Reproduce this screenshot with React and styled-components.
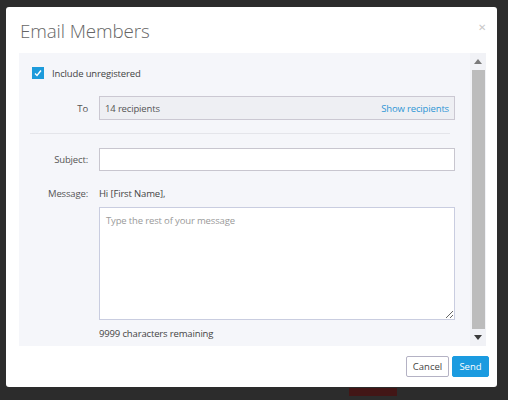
import React from "react";
import styled, { createGlobalStyle } from "styled-components";

const Global = createGlobalStyle`
  html, body { margin: 0; padding: 0; background: #2d2d2d; }
  body { font-family: "Open Sans", "Noto Sans", Arial, sans-serif; }
  * { box-sizing: border-box; }
`;

const Page = styled.div`
  width: 508px;
  height: 400px;
  overflow: hidden;
  background: #2c2c2c;
  padding: 7px 11px 0 6px;
  display: flex;
  flex-direction: column;
`;

const Modal = styled.div`
  width: 491px;
  height: 380px;
  background: #fff;
  border-radius: 3px;
  display: flex;
  flex-direction: column;
  flex-shrink: 0;
`;

const Header = styled.div`
  height: 46px;
  display: flex;
  align-items: center;
  justify-content: space-between;
  padding: 0 11px 0 14px;
`;

const Title = styled.h1`
  margin: 0;
  font-size: 18.8px;
  font-weight: 300;
  color: #666;
  letter-spacing: -0.1px;
  line-height: 1;
  padding-top: 2px;
`;

const Close = styled.span`
  font-size: 10px;
  color: #c8c8c8;
  line-height: 1;
  margin-top: -6px;
`;

const Panel = styled.div`
  margin: 0 11px 0 13px;
  height: 293px;
  background: #f5f6fa;
  display: flex;
`;

const Content = styled.div`
  flex: 1;
  padding: 14px 15px 0 13px;
  display: flex;
  flex-direction: column;
  font-size: 9.5px;
  color: #444;
  letter-spacing: -0.15px;
`;

const CheckRow = styled.label`
  display: flex;
  align-items: center;
  gap: 8px;
  height: 12px;
  color: #444;
`;

const Box = styled.span`
  width: 12px;
  height: 12px;
  background: #1d9bdb;
  display: inline-flex;
  align-items: center;
  justify-content: center;
`;

const Row = styled.div`
  display: flex;
  align-items: center;
  margin-top: ${(p) => p.$mt}px;
`;

const Label = styled.div`
  width: 56px;
  text-align: right;
  color: #555;
  margin-right: 11px;
  flex-shrink: 0;
`;

const Recipients = styled.div`
  flex: 1;
  height: 24px;
  background: #eeeff3;
  border: 1px solid #cbc8d2;
  display: flex;
  align-items: center;
  justify-content: space-between;
  padding: 0 5px 0 5px;
  color: #555;
`;

const Link = styled.a`
  color: #2f96d5;
  text-decoration: none;
`;

const Divider = styled.div`
  height: 1px;
  background: #e4e5ea;
  margin: 13px 5px 0 -2px;
`;

const Input = styled.input`
  flex: 1;
  height: 23px;
  border: 1px solid #c8c6cf;
  background: #fff;
  outline: none;
`;

const Greeting = styled.div`
  color: #444;
`;

const Field = styled.div`
  margin-left: 67px;
  margin-top: ${(p) => p.$mt}px;
  display: flex;
  flex-direction: column;
`;

const TextArea = styled.textarea`
  width: 356px;
  height: 113px;
  border: 1px solid #c9cde0;
  background: #fff;
  padding: 6px 6px;
  font-family: inherit;
  font-size: 9.5px;
  letter-spacing: -0.15px;
  outline: none;
  resize: both;
  &::placeholder { color: #9a9a9a; }
`;

const Count = styled.div`
  margin-top: 7px;
  color: #444;
`;

const Scrollbar = styled.div`
  width: 16px;
  display: flex;
  flex-direction: column;
  align-items: center;
  background: #f1f2f6;
`;

const Arrow = styled.div`
  height: 17px;
  display: flex;
  align-items: center;
  justify-content: center;
`;

const Thumb = styled.div`
  width: 13px;
  flex: 1;
  background: #bcbcbc;
  margin: 0 1px;
`;

const Footer = styled.div`
  flex: 1;
  display: flex;
  justify-content: flex-end;
  align-items: flex-start;
  gap: 3px;
  padding: 10px 8px 0 0;
`;

const Button = styled.button`
  height: 21px;
  width: ${(p) => (p.$primary ? 37 : 43)}px;
  padding: 0;
  font-family: inherit;
  font-size: 9.5px;
  border-radius: 2px;
  border: 1px solid ${(p) => (p.$primary ? "#1b9be0" : "#b4b2c4")};
  background: ${(p) => (p.$primary ? "#1b9be0" : "#fff")};
  color: ${(p) => (p.$primary ? "#fff" : "#444")};
`;

const Behind = styled.div`
  display: flex;
  height: 13px;
  align-items: flex-start;
  padding-top: 1px;
`;

const Frag = styled.span`
  margin-left: ${(p) => p.$ml}px;
  width: ${(p) => p.$w}px;
  height: 8px;
  background: ${(p) => p.$bg || "transparent"};
`;

export default function App() {
  return (
    <>
      <Global />
      <Page>
        <Modal>
          <Header>
            <Title>Email Members</Title>
            <Close>✕</Close>
          </Header>
          <Panel>
            <Content>
              <CheckRow>
                <Box>
                  <svg width="8" height="8" viewBox="0 0 8 8">
                    <path d="M1 4.5 L3 6.5 L7 1.5" stroke="#fff" strokeWidth="1.4" fill="none" />
                  </svg>
                </Box>
                Include unregistered
              </CheckRow>
              <Row $mt={17}>
                <Label>To</Label>
                <Recipients>
                  <span>14 recipients</span>
                  <Link href="#">Show recipients</Link>
                </Recipients>
              </Row>
              <Divider />
              <Row $mt={14}>
                <Label>Subject:</Label>
                <Input />
              </Row>
              <Row $mt={16}>
                <Label>Message:</Label>
                <Greeting>Hi [First Name],</Greeting>
              </Row>
              <Field $mt={7}>
                <TextArea placeholder="Type the rest of your message" />
                <Count>9999 characters remaining</Count>
              </Field>
            </Content>
            <Scrollbar>
              <Arrow>
                <svg width="8" height="5" viewBox="0 0 8 5"><path d="M0 5 L4 0 L8 5 Z" fill="#7a7a7a" /></svg>
              </Arrow>
              <Thumb />
              <Arrow>
                <svg width="8" height="5" viewBox="0 0 8 5"><path d="M0 0 L4 5 L8 0 Z" fill="#3a3a3a" /></svg>
              </Arrow>
            </Scrollbar>
          </Panel>
          <Footer>
            <Button>Cancel</Button>
            <Button $primary>Send</Button>
          </Footer>
        </Modal>
        <Behind>
          <Frag $ml={104} $w={48} />
          <Frag $ml={60} $w={40} />
          <Frag $ml={91} $w={48} $bg="#421616" />
          <Frag $ml={48} $w={20} />
        </Behind>
      </Page>
    </>
  );
}
